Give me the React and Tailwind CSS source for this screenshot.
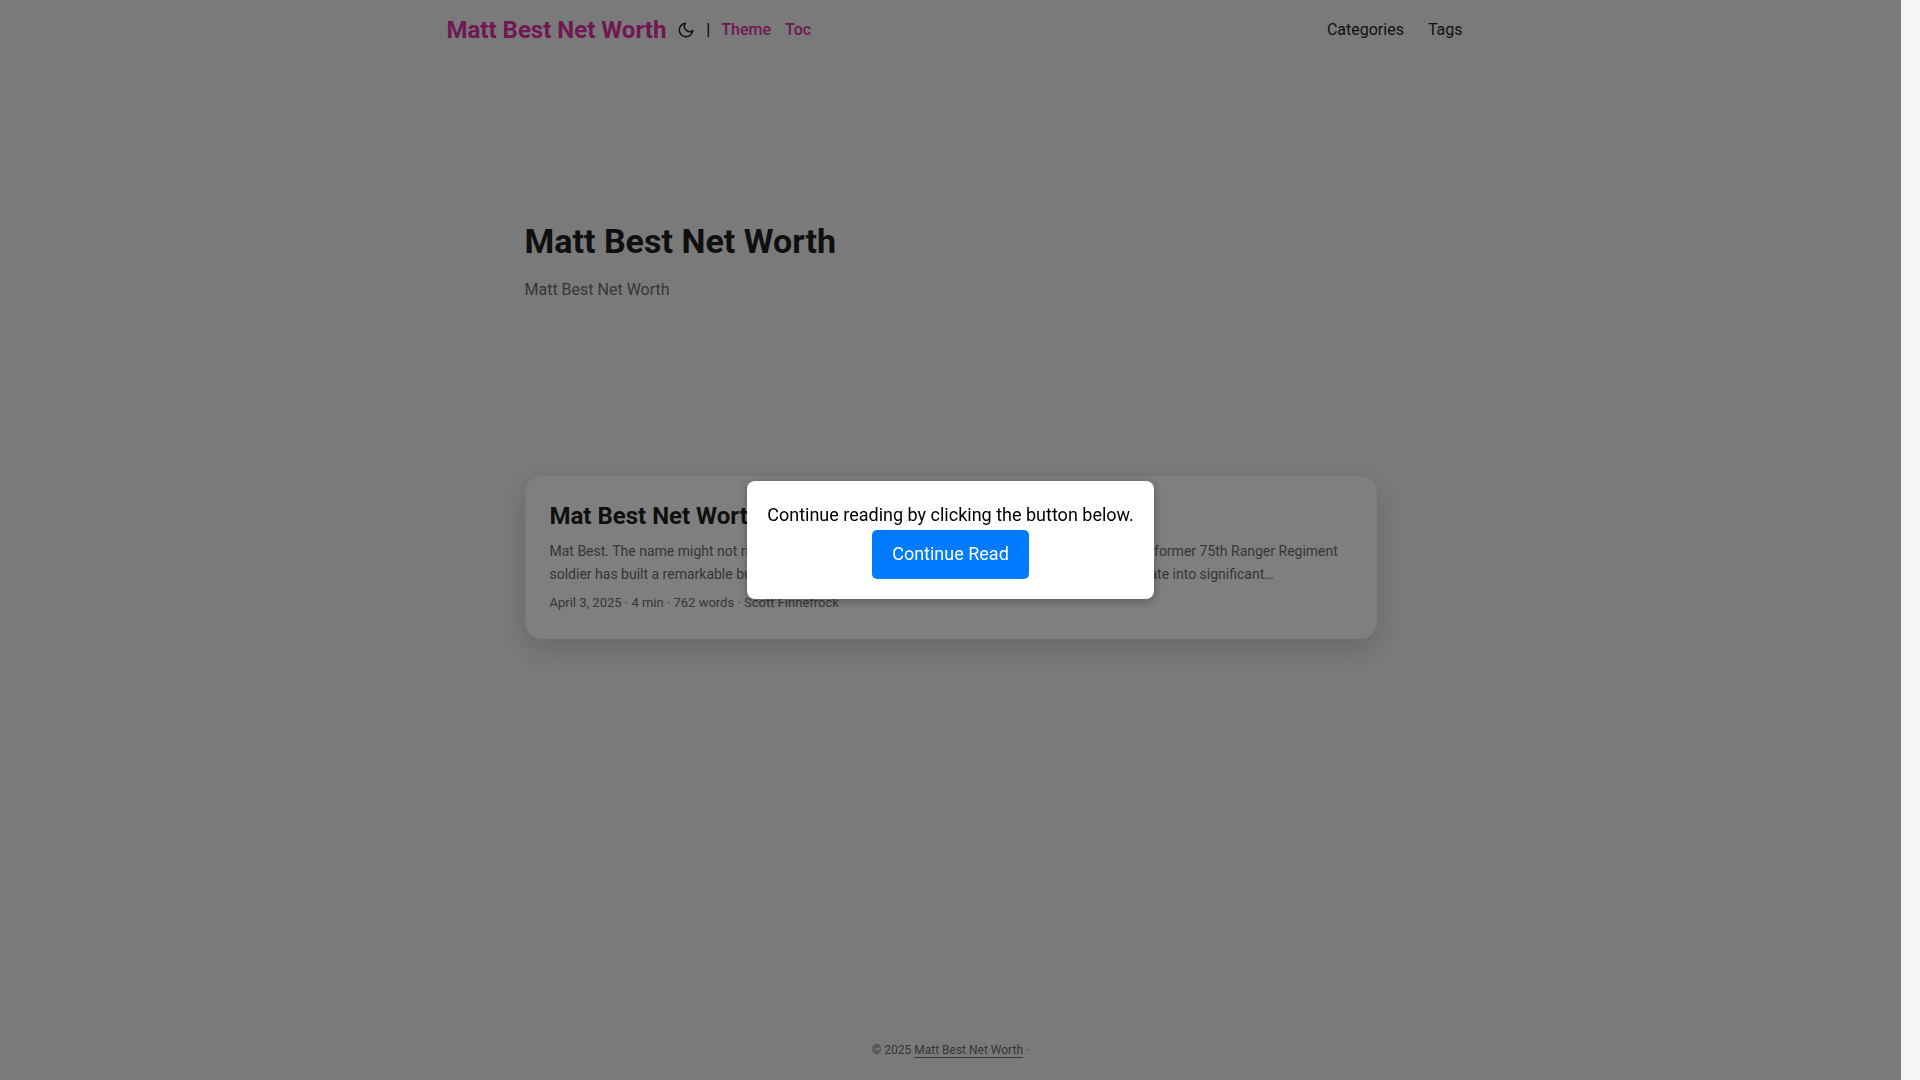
import React, { useState } from 'react';

const posts = [
    {
        title: 'Mat Best Net Worth',
        summary: 'Mat Best. The name might not ring a bell for all, but for the veteran and military communities, this former 75th Ranger Regiment soldier has built a remarkable business empire, on humor and grit. But how exactly did that translate into significant…',
        meta: 'April 3, 2025 · 4 min · 762 words · Scott Finnefrock',
    },
];

const Header = () => (
    <header className="w-full">
        <nav className="mx-auto flex h-[60px] max-w-[1072px] items-center justify-between pl-8 pr-6">
            <div className="flex items-center">
                <a href="#home" className="text-2xl font-bold text-[#df30a6]">Matt Best Net Worth</a>
                <button type="button" aria-label="Toggle theme" className="ml-[11px] p-0">
                    <svg
                        width="18"
                        height="18"
                        viewBox="0 0 24 24"
                        fill="none"
                        stroke="currentColor"
                        strokeWidth="2"
                        strokeLinecap="round"
                        strokeLinejoin="round"
                    >
                        <path d="M21 12.79A9 9 0 1 1 11.21 3 7 7 0 0 0 21 12.79z" />
                    </svg>
                </button>
                <span className="ml-[11px] font-medium text-black">|</span>
                <a href="#theme" className="ml-[11px] font-medium text-[#df30a6]">Theme</a>
                <a href="#toc" className="ml-[14px] font-medium text-[#df30a6]">Toc</a>
            </div>
            <ul className="flex items-center gap-6">
                <li><a href="#categories">Categories</a></li>
                <li><a href="#tags">Tags</a></li>
            </ul>
        </nav>
    </header>
);

const PostEntry = ({ post }) => (
    <article className="rounded-2xl border border-[#fafafa] bg-white px-6 pb-[25px] pt-[23px] shadow-[0_10px_30px_rgba(0,0,0,0.16)]">
        <h2 className="text-2xl/8 font-bold">{post.title}</h2>
        <p className="mb-[6px] mt-2 text-sm/[23px] text-[#6c6c6c]">{post.summary}</p>
        <footer className="text-[13px]/[21px] text-[#6c6c6c]">{post.meta}</footer>
    </article>
);

const App = () => {
    const [open, setOpen] = useState(true);

    return (
        <div className="flex min-h-screen bg-[#f5f5f5] font-[Roboto,sans-serif] text-base/[26px] text-[#1e1e1e]">
            <div className="flex min-w-0 flex-1 flex-col">
                <Header />
                <main className="mx-auto w-full max-w-[900px] flex-1 px-6">
                    <section className="pb-[173px] pt-[159px]">
                        <h1 className="text-[34px]/[44px] font-bold">Matt Best Net Worth</h1>
                        <p className="mt-[14px] text-[#6c6c6c]">Matt Best Net Worth</p>
                    </section>
                    {posts.map((post) => (
                        <PostEntry key={post.title} post={post} />
                    ))}
                </main>
                <footer className="flex h-[60px] items-center justify-center gap-[3px] text-xs text-[#6c6c6c]">
                    <span>© 2025</span>
                    <a href="#home" className="border-b border-current leading-[14px]">Matt Best Net Worth</a>
                    <span>·</span>
                </footer>
            </div>
            <div className="w-[19px] shrink-0" />

            {open && (
                <div className="fixed inset-y-0 left-0 right-[19px] flex items-center justify-center bg-black/50">
                    <div role="dialog" className="rounded-lg bg-white p-5 text-center text-lg/[28px] text-black shadow-[0_2px_10px_rgba(0,0,0,0.3)]">
                        <p className="pb-px">Continue reading by clicking the button below.</p>
                        <button
                            type="button"
                            onClick={() => setOpen(false)}
                            className="rounded-[5px] bg-[#007bff] px-5 pb-[11px] pt-[10px] text-white"
                        >
                            Continue Read
                        </button>
                    </div>
                </div>
            )}
        </div>
    );
};

export default App;
